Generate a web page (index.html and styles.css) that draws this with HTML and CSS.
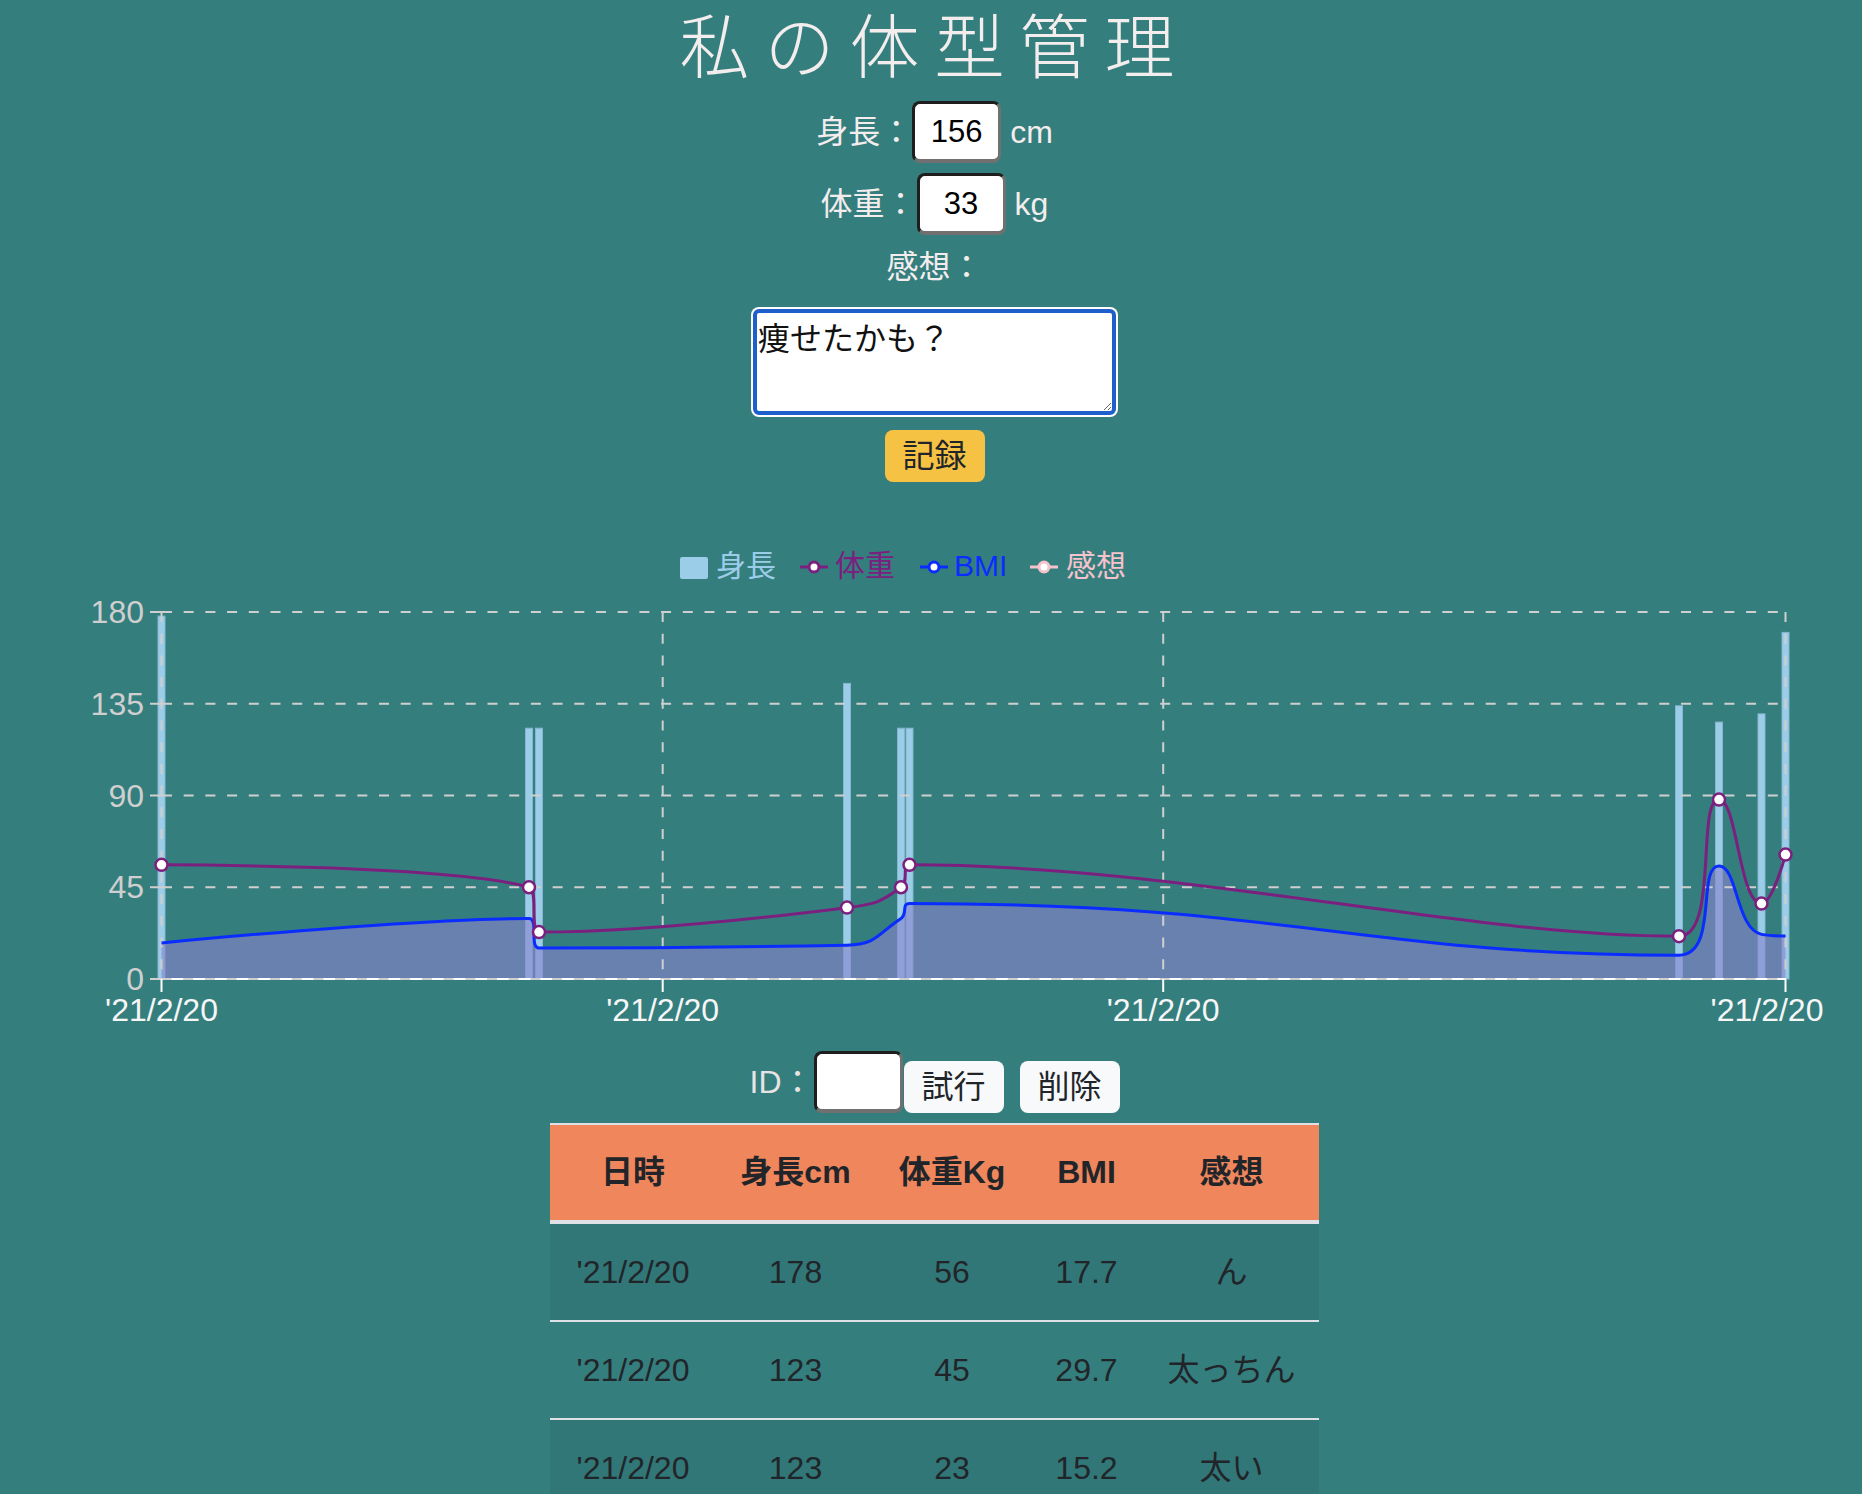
FILE: index.html
```html
<!DOCTYPE html>
<html lang="ja">
<head>
<meta charset="utf-8">
<title>私の体型管理</title>
<link rel="stylesheet" href="styles.css">
</head>
<body>
<main class="page">
  <h1 class="title">私の体型管理</h1>
  <div class="field field-height">
    <label class="field-label">身長：</label><input class="num-input" type="text" value="156"><span class="unit">cm</span>
  </div>
  <div class="field field-weight">
    <label class="field-label">体重：</label><input class="num-input" type="text" value="33"><span class="unit">kg</span>
  </div>
  <div class="memo-label">感想：</div>
  <textarea class="memo">痩せたかも？</textarea>
  <button class="btn btn-record" type="button">記録</button>

  <svg class="chart" width="1855" height="505" viewBox="7 530 1855 505" xmlns="http://www.w3.org/2000/svg">
    <!-- legend -->
    <g class="legend">
      <rect x="680" y="557" width="28" height="22" rx="2" fill="#9ccde8"/>
      <text x="716" y="576" class="legend-text" fill="#9ccde8">身長</text>
      <line x1="800" y1="567" x2="828" y2="567" stroke="#7b207f" stroke-width="3"/>
      <circle cx="814" cy="567" r="5" fill="#fff" stroke="#7b207f" stroke-width="3"/>
      <text x="835" y="576" class="legend-text" fill="#7b207f">体重</text>
      <line x1="920" y1="567" x2="948" y2="567" stroke="#0a2cff" stroke-width="3"/>
      <circle cx="934" cy="567" r="5" fill="#fff" stroke="#0a2cff" stroke-width="3"/>
      <text x="954" y="576" class="legend-text" fill="#0a2cff">BMI</text>
      <line x1="1030" y1="567" x2="1058" y2="567" stroke="#f5c3cb" stroke-width="3"/>
      <circle cx="1044" cy="567" r="5" fill="#fff" stroke="#f5c3cb" stroke-width="3"/>
      <text x="1066" y="576" class="legend-text" fill="#f5c3cb">感想</text>
    </g>

    <!-- y axis labels -->
    <g class="y-labels">
      <text x="144" y="623">180</text>
      <text x="144" y="714.75">135</text>
      <text x="144" y="806.5">90</text>
      <text x="144" y="898.25">45</text>
      <text x="144" y="990">0</text>
    </g>

    <!-- bars (身長) -->
    <g class="bars">
      <rect x="158" y="616.1" width="7" height="362.9"/>
      <rect x="525.5" y="728.2" width="7" height="250.8"/>
      <rect x="535.5" y="728.2" width="7" height="250.8"/>
      <rect x="843.5" y="683.4" width="7" height="295.6"/>
      <rect x="897.5" y="728.2" width="7" height="250.8"/>
      <rect x="906" y="728.2" width="7" height="250.8"/>
      <rect x="1675.5" y="705.8" width="7" height="273.2"/>
      <rect x="1715.5" y="722.1" width="7" height="256.9"/>
      <rect x="1758" y="713.9" width="7" height="265.1"/>
      <rect x="1782" y="632.4" width="7" height="346.6"/>
    </g>

    <!-- BMI area -->
    <path id="bmi-area" class="bmi-area" d=""/>

    <!-- grid -->
    <g class="grid">
      <line x1="150" y1="612" x2="162" y2="612" class="tick"/>
      <line x1="150" y1="703.75" x2="162" y2="703.75" class="tick"/>
      <line x1="150" y1="795.5" x2="162" y2="795.5" class="tick"/>
      <line x1="150" y1="887.25" x2="162" y2="887.25" class="tick"/>
      <line x1="150" y1="979" x2="162" y2="979" class="tick"/>
      <line x1="162" y1="612" x2="1786" y2="612" class="dash"/>
      <line x1="162" y1="703.75" x2="1786" y2="703.75" class="dash"/>
      <line x1="162" y1="795.5" x2="1786" y2="795.5" class="dash"/>
      <line x1="162" y1="887.25" x2="1786" y2="887.25" class="dash"/>
      <line x1="161.5" y1="612" x2="161.5" y2="979" class="dash"/>
      <line x1="662.7" y1="612" x2="662.7" y2="979" class="dash"/>
      <line x1="1163.2" y1="612" x2="1163.2" y2="979" class="dash"/>
      <line x1="1785.5" y1="612" x2="1785.5" y2="979" class="dash"/>
      <line x1="161.5" y1="979" x2="1786" y2="979" class="axis"/>
      <line x1="161.5" y1="979" x2="1786" y2="979" class="dash"/>
      <line x1="161.5" y1="979" x2="161.5" y2="992" class="xtick"/>
      <line x1="662.7" y1="979" x2="662.7" y2="992" class="xtick"/>
      <line x1="1163.2" y1="979" x2="1163.2" y2="992" class="xtick"/>
      <line x1="1785.5" y1="979" x2="1785.5" y2="992" class="xtick"/>
    </g>

    <!-- lines -->
    <path id="bmi-line" class="bmi-line" d=""/>
    <path id="weight-line" class="weight-line" d=""/>

    <g class="points">
      <circle cx="161.5" cy="864.8" r="6"/>
      <circle cx="529" cy="887.25" r="6"/>
      <circle cx="539" cy="932.1" r="6"/>
      <circle cx="847" cy="907.6" r="6"/>
      <circle cx="901" cy="887.25" r="6"/>
      <circle cx="909.5" cy="864.8" r="6"/>
      <circle cx="1679" cy="936.2" r="6"/>
      <circle cx="1719" cy="799.6" r="6"/>
      <circle cx="1761.5" cy="903.6" r="6"/>
      <circle cx="1785.5" cy="854.6" r="6"/>
    </g>

    <!-- x axis labels -->
    <g class="x-labels">
      <text x="161.5" y="1021">'21/2/20</text>
      <text x="662.7" y="1021">'21/2/20</text>
      <text x="1163.2" y="1021">'21/2/20</text>
      <text x="1767" y="1021">'21/2/20</text>
    </g>
  </svg>

  <div class="id-row">
    <label class="id-label">ID：</label><input class="num-input id-input" type="text"><button class="btn btn-light btn-try" type="button">試行</button><button class="btn btn-light btn-delete" type="button">削除</button>
  </div>

  <table class="records">
    <colgroup>
      <col class="c1"><col class="c2"><col class="c3"><col class="c4"><col class="c5">
    </colgroup>
    <thead>
      <tr><th>日時</th><th>身長cm</th><th>体重Kg</th><th>BMI</th><th>感想</th></tr>
    </thead>
    <tbody>
      <tr><td>'21/2/20</td><td>178</td><td>56</td><td>17.7</td><td>ん</td></tr>
      <tr><td>'21/2/20</td><td>123</td><td>45</td><td>29.7</td><td>太っちん</td></tr>
      <tr><td>'21/2/20</td><td>123</td><td>23</td><td>15.2</td><td>太い</td></tr>
    </tbody>
  </table>
</main>
<script src="script.js"></script>
</body>
</html>
```

FILE: styles.css
```css
html {
  overflow: hidden;
}
body {
  margin: 0;
  padding: 0 0 0 7px;
  background: #357e7e;
  color: #f3eded;
  font-family: "Liberation Sans", "Noto Sans CJK JP", sans-serif;
}
.page {
  display: flex;
  flex-direction: column;
  align-items: center;
}
.title {
  margin: 0;
  box-sizing: border-box;
  height: 88px;
  padding-top: 5px;
  font-size: 70px;
  line-height: 88px;
  font-weight: 300;
  letter-spacing: 15px;
  color: #f3eded;
}
.field {
  display: flex;
  align-items: center;
  height: 62px;
  font-size: 32px;
}
.field-height { margin-top: 13px; }
.field-weight { margin-top: 10px; }
.field-label { line-height: 48px; }
.unit { margin-left: 9px; line-height: 48px; }
.num-input {
  box-sizing: border-box;
  width: 89px;
  height: 62px;
  margin: 0;
  padding: 0;
  border-style: solid;
  border-width: 3px 3px 4px 3px;
  border-color: #1e1e1e #707070 #707070 #1e1e1e;
  border-radius: 8px;
  background: #fff;
  color: #000;
  font-family: "Liberation Sans", "Noto Sans CJK JP", sans-serif;
  font-size: 31px;
  text-align: center;
}
.memo-label {
  margin-top: 8px;
  font-size: 32px;
  line-height: 48px;
}
.memo {
  box-sizing: border-box;
  display: block;
  width: 363px;
  height: 106px;
  margin-top: 18px;
  padding: 6px 1px;
  border: 4px solid #1f5fcc;
  border-radius: 6px;
  box-shadow: 0 0 0 2px #fff;
  outline: none;
  background: #fff;
  color: #111;
  font-family: "Liberation Sans", "Noto Sans CJK JP", sans-serif;
  font-size: 32px;
  line-height: 40px;
}
.btn {
  box-sizing: border-box;
  height: 52px;
  width: 100px;
  padding: 0;
  border: none;
  border-radius: 8px;
  color: #212529;
  font-family: "Liberation Sans", "Noto Sans CJK JP", sans-serif;
  font-size: 32px;
  line-height: 52px;
}
.btn-record {
  margin-top: 15px;
  background: #f5c244;
}
.chart {
  display: block;
  margin-top: 48px;
  align-self: flex-start;
}
.legend-text {
  font-family: "Liberation Sans", "Noto Sans CJK JP", sans-serif;
  font-size: 30px;
}
.y-labels text {
  font-family: "Liberation Sans", "Noto Sans CJK JP", sans-serif;
  font-size: 32px;
  fill: #cfcfcf;
  text-anchor: end;
}
.x-labels text {
  font-family: "Liberation Sans", "Noto Sans CJK JP", sans-serif;
  font-size: 32px;
  fill: #f6f6f6;
  text-anchor: middle;
}
.bars rect {
  fill: #9ccde8;
  stroke: #86b6cf;
  stroke-width: 1;
}
.bmi-area {
  fill: rgba(135, 130, 205, 0.62);
  stroke: none;
}
.grid .tick {
  stroke: #cfcfcf;
  stroke-width: 2;
}
.grid .dash {
  stroke: #cfcfcf;
  stroke-width: 2;
  stroke-dasharray: 10 11.7;
}
.grid .axis {
  stroke: #ffffff;
  stroke-width: 2;
}
.grid .xtick {
  stroke: #ffffff;
  stroke-width: 2;
}
.bmi-line {
  fill: none;
  stroke: #0a2cff;
  stroke-width: 3;
}
.weight-line {
  fill: none;
  stroke: #7b207f;
  stroke-width: 3;
}
.points circle {
  fill: #fff;
  stroke: #7b207f;
  stroke-width: 2.5;
}
.id-row {
  display: flex;
  align-items: center;
  margin-top: 16px;
  font-size: 32px;
}
.id-label {
  width: 64px;
  line-height: 48px;
  color: #e8e4e4;
}
.btn-light {
  background: #f8f9fa;
  align-self: flex-end;
}
.btn-try { margin-left: 1px; }
.btn-delete { margin-left: 16px; }
.records {
  margin-top: 10px;
  width: 769px;
  table-layout: fixed;
  border-collapse: separate;
  border-spacing: 0;
  color: #212529;
  font-size: 32px;
}
.records .c1 { width: 166px; }
.records .c2 { width: 159px; }
.records .c3 { width: 154px; }
.records .c4 { width: 115px; }
.records .c5 { width: 175px; }
.records th {
  background: #f0865c;
  border-top: 2px solid #dee2e6;
  border-bottom: 4px solid #dee2e6;
  padding: 23px 0 24px;
  line-height: 48px;
  font-weight: bold;
  text-align: center;
  white-space: nowrap;
}
.records td {
  border-top: 2px solid #dee2e6;
  padding: 24px 0;
  line-height: 48px;
  text-align: center;
  white-space: nowrap;
}
.records tbody tr:first-child td {
  border-top: none;
}
.records tbody tr:nth-child(odd) td {
  background: rgba(0, 0, 0, 0.05);
}
```

FILE: script.js
```js
(function () {
  var X = [161.5, 529, 539, 847, 901, 909.5, 1679, 1719, 1761.5, 1785.5];
  var W = [56, 45, 23, 35, 45, 56, 21, 88, 37, 61];
  var B = [17.7, 29.7, 15.2, 16.6, 29.7, 37.0, 11.7, 55.4, 21.9, 21.1];
  var BASE = 979, K = 367 / 180;

  function toPts(v) {
    return v.map(function (val, i) { return [X[i], BASE - val * K]; });
  }
  function f(n) { return Math.round(n * 100) / 100; }

  function smoothD(p, s) {
    var d = 'M' + f(p[0][0]) + ' ' + f(p[0][1]);
    var cpx0 = p[0][0], cpy0 = p[0][1];
    for (var i = 1; i < p.length; i++) {
      var x = p[i][0], y = p[i][1], px = p[i - 1][0], py = p[i - 1][1];
      var cpx1, cpy1, ncx = x, ncy = y;
      if (i === p.length - 1) {
        cpx1 = x; cpy1 = y;
      } else {
        var nx = p[i + 1][0], ny = p[i + 1][1];
        var vx = nx - px, vy = ny - py;
        var dx0 = x - px, dy0 = y - py, dx1 = nx - x, dy1 = ny - y;
        var l0 = Math.sqrt(dx0 * dx0 + dy0 * dy0);
        var l1 = Math.sqrt(dx1 * dx1 + dy1 * dy1);
        var r = l1 / (l1 + l0);
        ncx = x + vx * s * r; ncy = y + vy * s * r;
        ncx = Math.min(ncx, Math.max(nx, x)); ncy = Math.min(ncy, Math.max(ny, y));
        ncx = Math.max(ncx, Math.min(nx, x)); ncy = Math.max(ncy, Math.min(ny, y));
        vx = ncx - x; vy = ncy - y;
        cpx1 = x - vx * l0 / l1; cpy1 = y - vy * l0 / l1;
        cpx1 = Math.min(cpx1, Math.max(px, x)); cpy1 = Math.min(cpy1, Math.max(py, y));
        cpx1 = Math.max(cpx1, Math.min(px, x)); cpy1 = Math.max(cpy1, Math.min(py, y));
        vx = x - cpx1; vy = y - cpy1;
        ncx = x + vx * l1 / l0; ncy = y + vy * l1 / l0;
      }
      d += ' C' + [cpx0, cpy0, cpx1, cpy1, x, y].map(f).join(' ');
      cpx0 = ncx; cpy0 = ncy;
    }
    return d;
  }

  var wd = smoothD(toPts(W), 0.5);
  var bd = smoothD(toPts(B), 0.5);
  document.getElementById('weight-line').setAttribute('d', wd);
  document.getElementById('bmi-line').setAttribute('d', bd);
  document.getElementById('bmi-area').setAttribute('d', bd + ' L' + X[X.length - 1] + ' ' + BASE + ' L' + X[0] + ' ' + BASE + ' Z');
})();
```
